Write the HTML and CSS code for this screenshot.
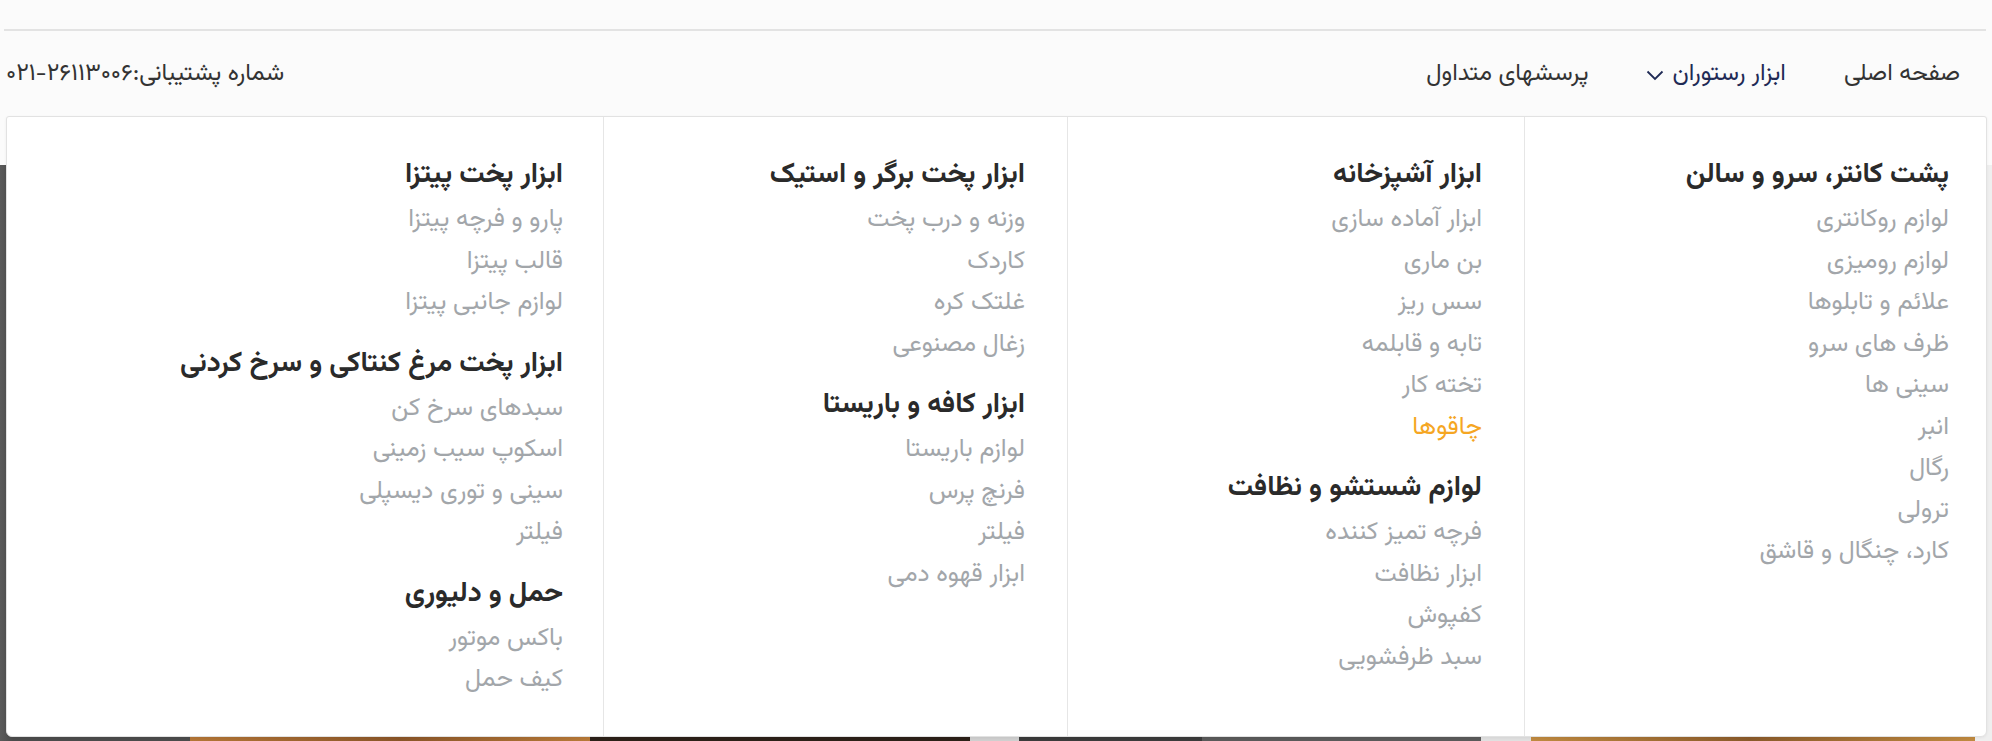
FILE: index.html
```html
<!DOCTYPE html>
<html lang="fa" dir="rtl">
<head>
<meta charset="utf-8">
<title>ابزار رستوران</title>
<link rel="stylesheet" href="styles.css">
</head>
<body>
<div class="page">
  <div class="topbar"></div>
  <nav class="nav">
    <ul class="menu">
      <li class="menu-item">صفحه اصلی</li>
      <li class="menu-item active">ابزار رستوران
        <svg class="chev" viewBox="0 0 18 11" width="18" height="11"><polyline points="1.5,1.5 9,9 16.5,1.5" fill="none" stroke="currentColor" stroke-width="1.8"/></svg>
      </li>
      <li class="menu-item">پرسشهای متداول</li>
    </ul>
    <div class="support">شماره پشتیبانی:<span dir="ltr">۰۲۱-۲۶۱۱۳۰۰۶</span></div>
  </nav>
  <div class="hero"></div>

  <div class="mega">
    <div class="col">
      <div class="group">
        <h3 class="group-title">پشت کانتر، سرو و سالن</h3>
        <ul class="links">
          <li>لوازم روکانتری</li>
          <li>لوازم رومیزی</li>
          <li>علائم و تابلوها</li>
          <li>ظرف های سرو</li>
          <li>سینی ها</li>
          <li>انبر</li>
          <li>رگال</li>
          <li>ترولی</li>
          <li>کارد، چنگال و قاشق</li>
        </ul>
      </div>
    </div>
    <div class="col">
      <div class="group">
        <h3 class="group-title">ابزار آشپزخانه</h3>
        <ul class="links">
          <li>ابزار آماده سازی</li>
          <li>بن ماری</li>
          <li>سس ریز</li>
          <li>تابه و قابلمه</li>
          <li>تخته کار</li>
          <li class="current">چاقوها</li>
        </ul>
      </div>
      <div class="group">
        <h3 class="group-title">لوازم شستشو و نظافت</h3>
        <ul class="links">
          <li>فرچه تمیز کننده</li>
          <li>ابزار نظافت</li>
          <li>کفپوش</li>
          <li>سبد ظرفشویی</li>
        </ul>
      </div>
    </div>
    <div class="col">
      <div class="group">
        <h3 class="group-title">ابزار پخت برگر و استیک</h3>
        <ul class="links">
          <li>وزنه و درب پخت</li>
          <li>کاردک</li>
          <li>غلتک کره</li>
          <li>زغال مصنوعی</li>
        </ul>
      </div>
      <div class="group">
        <h3 class="group-title">ابزار کافه و باریستا</h3>
        <ul class="links">
          <li>لوازم باریستا</li>
          <li>فرنچ پرس</li>
          <li>فیلتر</li>
          <li>ابزار قهوه دمی</li>
        </ul>
      </div>
    </div>
    <div class="col">
      <div class="group">
        <h3 class="group-title">ابزار پخت پیتزا</h3>
        <ul class="links">
          <li>پارو و فرچه پیتزا</li>
          <li>قالب پیتزا</li>
          <li>لوازم جانبی پیتزا</li>
        </ul>
      </div>
      <div class="group">
        <h3 class="group-title">ابزار پخت مرغ کنتاکی و سرخ کردنی</h3>
        <ul class="links">
          <li>سبدهای سرخ کن</li>
          <li>اسکوپ سیب زمینی</li>
          <li>سینی و توری دیسپلی</li>
          <li>فیلتر</li>
        </ul>
      </div>
      <div class="group">
        <h3 class="group-title">حمل و دلیوری</h3>
        <ul class="links">
          <li>باکس موتور</li>
          <li>کیف حمل</li>
        </ul>
      </div>
    </div>
  </div>
</div>
</body>
</html>
```

FILE: styles.css
```css
* { box-sizing: border-box; }

html, body {
  margin: 0;
  padding: 0;
}

body {
  background: #fbfbfb;
  font-family: "Vazirmatn", "Noto Sans Arabic", "DejaVu Sans", sans-serif;
  color: #333;
  overflow: hidden;
}

.page {
  position: relative;
  width: 1992px;
  height: 741px;
}

.topbar {
  height: 31px;
  margin: 0 6px 0 4px;
  border-bottom: 2px solid #e3e3e3;
}

.nav {
  height: 85px;
  display: flex;
  align-items: center;
  justify-content: space-between;
  padding: 0 32px 0 6px;
}

.menu {
  list-style: none;
  margin: 0;
  padding: 0;
  display: flex;
  align-items: center;
  gap: 58px;
}

.menu-item {
  font-size: 24px;
  color: #333;
  display: flex;
  align-items: center;
  gap: 8px;
}

.menu-item.active {
  color: #1f2a55;
}

.chev {
  display: block;
  margin-top: 4px;
}

.support {
  font-size: 24px;
  color: #333;
}

.hero {
  margin-top: 49px;
  height: 576px;
  background: linear-gradient(to right,
    #5a5a5a 0, #4b4b4b 13px, #4b4b4b 190px,
    #b47636 190px, #8a5528 400px, #b87a38 590px,
    #2c2118 590px, #2c2118 970px,
    #cfcfcf 970px, #cfcfcf 1019px,
    #3b3b3b 1019px, #3b3b3b 1202px,
    #5a5a5a 1202px, #5a5a5a 1481px,
    #e0e0e0 1481px, #e0e0e0 1531px,
    #c08a40 1531px, #8a5a2a 1750px, #c08a40 1975px,
    #efefef 1975px);
}

.mega {
  position: absolute;
  top: 116px;
  left: 6px;
  right: 5px;
  height: 621px;
  background: #fff;
  border: 1px solid #e2e2e2;
  border-radius: 3px 3px 6px 6px;
  box-shadow: 0 1px 3px rgba(0,0,0,0.06);
  display: grid;
  grid-template-columns: 462px 457px 464px 1fr;
}

.col {
  padding: 34px 37px 0 0;
  border-left: 1px solid #e6e6e6;
  text-align: right;
}

.col + .col {
  padding-right: 42px;
}

.col:last-child {
  border-left: none;
  padding-right: 40px;
}

.group + .group {
  margin-top: 16px;
}

.group-title {
  margin: 0;
  font-size: 28px;
  line-height: 48px;
  font-weight: bold;
  color: #2a2a2a;
}

.links {
  list-style: none;
  margin: 0;
  padding: 0;
}

.links li {
  font-size: 25px;
  line-height: 41.5px;
  color: #a2a6aa;
}

.links li.current {
  color: #f5a623;
}
```
